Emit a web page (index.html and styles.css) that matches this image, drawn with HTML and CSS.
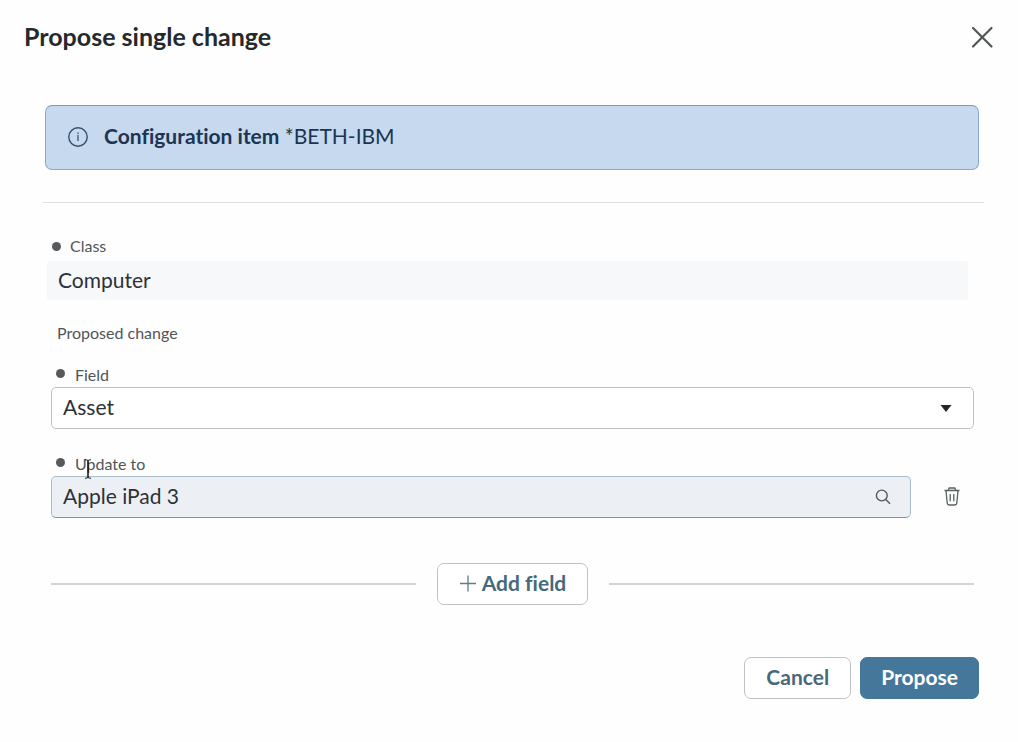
FILE: index.html
```html
<!DOCTYPE html>
<html lang="en">
<head>
    <meta charset="UTF-8">
    <meta name="viewport" content="width=device-width, initial-scale=1.0">
    <title>Propose single change</title>
    <link rel="stylesheet" href="styles.css">
</head>
<body>
    <div class="modal" role="dialog" aria-labelledby="modal-title">
        <header class="modal-header">
            <h1 id="modal-title">Propose single change</h1>
            <button type="button" class="icon-button" aria-label="Close">
                <svg width="24" height="24" viewBox="0 0 24 24" fill="none" stroke="#505556" stroke-width="2.200" stroke-linecap="round">
                    <path d="M3 3 21.500 21.500M21.500 3 3 21.500"/>
                </svg>
            </button>
        </header>

        <div class="banner">
            <svg width="20" height="20" viewBox="0 0 20 20" fill="none" stroke="#334d6c">
                <circle cx="10" cy="10" r="9.200" stroke-width="1.400"/>
                <path d="M10 8v6M10 5.500v1.500" stroke-width="1.200"/>
            </svg>
            <p><strong>Configuration item</strong> *BETH-IBM</p>
        </div>

        <hr class="divider">

        <form class="change-form">
            <div class="field class-field">
                <label for="class" class="required">Class</label>
                <input type="text" id="class" class="readonly" value="Computer" readonly>
            </div>

            <h2>Proposed change</h2>

            <div class="field change-field">
                <label for="field" class="required">Field</label>
                <div class="control">
                    <select id="field">
                        <option>Asset</option>
                    </select>
                    <svg class="control-icon caret" width="12" height="8" viewBox="0 0 12 8">
                        <path d="M0.500 1h11L6 8z" fill="#202526"/>
                    </svg>
                </div>
            </div>

            <div class="field change-field">
                <label for="update" class="required">Update to</label>
                <div class="update-row">
                    <div class="control">
                        <input type="text" id="update" value="Apple iPad 3">
                        <svg class="control-icon search" width="16" height="16" viewBox="0 0 16 16" fill="none" stroke="#515b61" stroke-width="1.400">
                            <circle cx="6.800" cy="6.500" r="5.400"/>
                            <path d="M10.700 10.400 15 14.800"/>
                        </svg>
                    </div>
                    <button type="button" class="icon-button" aria-label="Delete field">
                        <svg width="18" height="20" viewBox="0 0 18 20" fill="none" stroke="#596062" stroke-width="1.300">
                            <path d="M1.500 3.500h15M5.200 3.300 6.200 1h5.600l1 2.300"/>
                            <path d="M3 3.700 4.200 16c.1 1.200.8 2 1.800 2h6c1 0 1.700-.8 1.800-2L15 3.700M7.200 7v7.200M10.800 7v7.200"/>
                        </svg>
                    </button>
                </div>
                <svg class="cursor" width="8" height="20" viewBox="0 0 8 20" fill="none" stroke="#111">
                    <path d="M4 1.500v17" stroke-width="1.500"/>
                    <path d="M1 .8c2 0 3 .4 3 1.400 0-1 1-1.400 3-1.400M1 19.200c2 0 3-.4 3-1.400 0 1 1 1.400 3 1.400"/>
                </svg>
            </div>

            <div class="add-row">
                <button type="button" class="button">
                    <svg width="18" height="18" viewBox="0 0 18 18" stroke="#607d89" stroke-width="1.300">
                        <path d="M9 1.500v16M1 9.500h16"/>
                    </svg>
                    Add field
                </button>
            </div>

            <footer class="modal-footer">
                <button type="button" class="button">Cancel</button>
                <button type="submit" class="button primary">Propose</button>
            </footer>
        </form>
    </div>
</body>
</html>
```

FILE: styles.css
```css
* {
    box-sizing: border-box;
}

body {
    margin: 0;
    background-color: #fefefe;
    color: #2c3236;
    font-family: Lato, sans-serif;
    font-size: 21px;
    font-variant-ligatures: none;
    line-height: 24px;
}

h1,
h2,
p {
    margin: 0;
}

button,
input,
select {
    font: inherit;
    font-variant-ligatures: none;
    color: inherit;
}

.modal {
    padding: 21px 24px 24px;
}

.modal-header {
    display: flex;
    justify-content: space-between;
    align-items: center;
}

h1 {
    padding-bottom: 2px;
    color: #24292d;
    font-size: 25px;
    line-height: 30px;
}

.icon-button {
    display: flex;
    padding: 0;
    border: none;
    background: none;
    cursor: pointer;
}

.banner {
    display: flex;
    align-items: center;
    gap: 16px;
    min-height: 65px;
    margin: 52px 15px 0 21px;
    padding: 0 22px 2px;
    border: 1px solid #8aa9cf;
    border-top-color: #8099b9;
    border-radius: 7px;
    background-color: #c7d9ee;
    color: #1c3553;
}

.banner p {
    padding-bottom: 2px;
}

.divider {
    margin: 32px 10px 32px 19px;
    border: none;
    border-top: 1px solid #dfe1e2;
}

.change-form {
    margin: 0 20px 0 27px;
}

.field {
    position: relative;
    margin-bottom: 23px;
}

label {
    display: flex;
    align-items: center;
    gap: 9px;
    padding-left: 5px;
    color: #505558;
    font-size: 16px;
    line-height: 24px;
}

.required::before {
    content: "";
    width: 9px;
    height: 9px;
    border-radius: 50%;
    background-color: #575a5d;
}

.change-field label {
    gap: 10px;
}

.change-field .required::before {
    margin-bottom: 4px;
}

.class-field {
    margin: 0 6px 21px -4px;
}

.class-field label {
    padding-bottom: 4px;
    line-height: 22px;
}

h2 {
    padding-left: 6px;
    color: #505558;
    font-size: 16px;
    font-weight: 400;
    line-height: 24px;
    margin-bottom: 18px;
}

input,
select {
    display: block;
    width: 100%;
    height: 42px;
    padding: 0 11px 3px;
    border: 1px solid #bfc2c4;
    border-radius: 5px;
    background-color: #fff;
    appearance: none;
}

.readonly {
    height: 39px;
    border: none;
    border-radius: 2px;
    background-color: #f7f8fa;
}

.control {
    position: relative;
    flex: 1;
}

.control-icon {
    position: absolute;
    top: 0;
    bottom: 0;
    margin: auto;
    pointer-events: none;
}

.caret {
    right: 22px;
}

.search {
    right: 20px;
}

.update-row {
    display: flex;
    align-items: center;
    gap: 32px;
    padding-right: 13px;
}

#update {
    border-color: #a9bdc9;
    border-bottom-color: #6f96a9;
    background-color: #ecf0f5;
}

/* text pointer resting over the label */
.cursor {
    position: absolute;
    left: 33px;
    top: 7px;
}

.button {
    display: flex;
    align-items: center;
    gap: 5px;
    height: 42px;
    padding: 0 21px 3px;
    border: 1px solid #bfc2c4;
    border-radius: 7px;
    background-color: #fff;
    color: #47697a;
    font-weight: 700;
    cursor: pointer;
}

.button.primary {
    padding: 0 20px 3px;
    border-color: #447799;
    background-color: #447799;
    color: #fff;
}

.add-row {
    display: flex;
    align-items: center;
    gap: 21px;
    margin-top: 45px;
}

.add-row::before,
.add-row::after {
    content: "";
    flex: 1;
    height: 2px;
    background-color: #d3d4d5;
}

.modal-footer {
    display: flex;
    justify-content: flex-end;
    gap: 9px;
    margin: 52px -5px 0 0;
}
```
